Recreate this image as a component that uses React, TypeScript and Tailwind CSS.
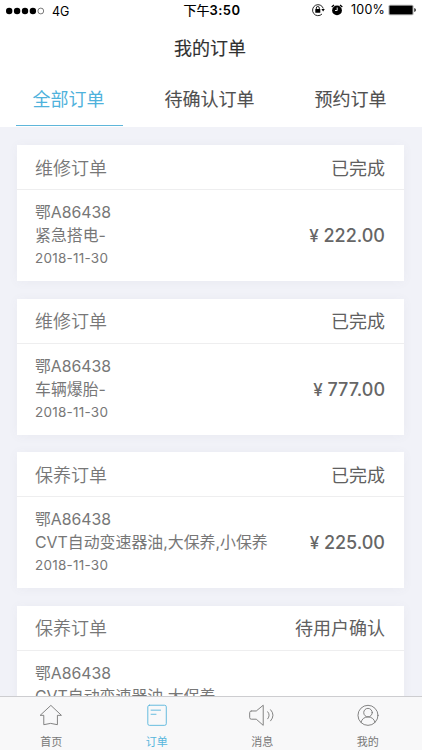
import type { ReactNode } from 'react';

type Order = {
  kind: string;
  status: string;
  plate: string;
  service: string;
  date: string;
  price: string;
};

const orders: Order[] = [
  { kind: '维修订单', status: '已完成', plate: '鄂A86438', service: '紧急搭电-', date: '2018-11-30', price: '222.00' },
  { kind: '维修订单', status: '已完成', plate: '鄂A86438', service: '车辆爆胎-', date: '2018-11-30', price: '777.00' },
  { kind: '保养订单', status: '已完成', plate: '鄂A86438', service: 'CVT自动变速器油,大保养,小保养', date: '2018-11-30', price: '225.00' },
  { kind: '保养订单', status: '待用户确认', plate: '鄂A86438', service: 'CVT自动变速器油,大保养', date: '', price: '' },
];

function StatusBar() {
  return (
    <div className="grid h-5 grid-cols-3 items-center text-[12.5px] leading-5 text-black">
      <div className="flex items-center pl-[6px]">
        <svg width="39" height="8" viewBox="0 0 39 8">
          <circle cx="3.2" cy="4" r="3.2" />
          <circle cx="11.1" cy="4" r="3.2" />
          <circle cx="19" cy="4" r="3.2" />
          <circle cx="26.9" cy="4" r="3.2" />
          <circle cx="34.8" cy="4" r="2.9" fill="none" stroke="#222" strokeWidth="0.6" />
        </svg>
        <span className="pt-[2px] pl-[7px]">4G</span>
      </div>
      <div className="-mt-[3px] pl-[2px] text-center text-[13px] font-semibold tracking-[0.5px] whitespace-nowrap"><span className="text-[13px] font-normal tracking-normal [-webkit-text-stroke:0.2px]">下午</span>3:50</div>
      <div className="-mt-[2px] flex items-center justify-end pr-[6px]">
        <svg width="14" height="14" viewBox="0 0 14 14" className="mr-[6px]">
          <path d="M12.3 5.5A5.5 5.5 0 1 0 11 11" fill="none" stroke="#111" strokeWidth="0.9" />
          <path d="M10.4 6h3.4l-1.7 2.6z" />
          <rect x="4.3" y="6" width="5" height="3.8" rx="0.4" />
          <path d="M5.3 6.2V5a1.5 1.5 0 0 1 3 0v1.2" fill="none" stroke="#000" strokeWidth="0.9" />
        </svg>
        <svg width="12" height="12" viewBox="0 0 12 12" className="mr-[8px]">
          <circle cx="6" cy="6.4" r="4.9" />
          <path d="M.7 3.1 3 1M11.3 3.1 9 1" stroke="#000" strokeWidth="1.3" />
          <path d="M6.2 3.5v3H4" fill="none" stroke="#fff" strokeWidth="0.9" />
        </svg>
        <span className="tracking-[0.2px]">100%</span>
        <svg width="28" height="12" viewBox="0 0 28 12" className="ml-[3px]">
          <rect x="0.5" y="0.7" width="25" height="10.6" rx="1.6" fill="#aaa" />
          <rect x="1.5" y="1.7" width="23" height="8.6" rx="0.8" />
          <path d="M26.4 4v4q1.4-.5 1.4-2t-1.4-2" />
        </svg>
      </div>
    </div>
  );
}

function Tab({ label, active = false }: { label: string; active?: boolean }) {
  return (
    <div className={`flex h-[59px] w-[107px] flex-col items-center justify-between pt-[19px] text-[18px] leading-7 whitespace-nowrap ${active ? 'text-[#4fb2dc]' : 'text-[#505050] [-webkit-text-stroke:0.1px]'}`}>
      <span className="-ml-[2px]">{label}</span>
      {active && <div className="h-px w-full bg-[#5fb6da]" />}
    </div>
  );
}

function OrderCard({ order }: { order: Order }) {
  return (
    <article className="h-[136px] shrink-0 bg-white text-[#777] shadow-[0_1px_10px_rgba(90,90,120,0.05)]">
      <header className="flex h-[45px] items-center justify-between border-b border-[#eeeeef] pt-[2px] pr-[19px] pl-[18.5px] text-[18px]">
        <span className="font-[350]">{order.kind}</span>
        <span className="text-[#606060]">{order.status}</span>
      </header>
      <div className="flex justify-between pt-[11px] pr-[19px] pl-[18.5px]">
        <div className="whitespace-nowrap">
          <p className="text-[15.8px] leading-6">{order.plate}</p>
          <p className="-mt-px text-[15.9px] leading-6">{order.service}</p>
          <p className="text-[13.5px] leading-5 tracking-[0.25px]">{order.date}</p>
        </div>
        {order.price && (
          <p className="pt-[21px] text-[18px] leading-7 font-medium whitespace-pre text-[#666]"><span className="text-[17px]">¥</span> {order.price}</p>
        )}
      </div>
    </article>
  );
}

function NavItem({ label, active = false, children }: { label: string; active?: boolean; children: ReactNode }) {
  return (
    <div className={`flex w-[105.5px] flex-col items-center pt-[7px] ${active ? 'text-[#56b5dc]' : 'text-[#777]'}`}>
      <svg width="32" height="28" viewBox="0 0 32 28" fill="none" stroke="currentColor" strokeWidth="1.1" strokeLinejoin="round" strokeLinecap="round">
        {children}
      </svg>
      <span className="mt-[7px] text-[11px] leading-4">{label}</span>
    </div>
  );
}

export default function App() {
  return (
    <div className="flex h-[750px] w-[422px] flex-col overflow-hidden bg-[#f1f2f8] font-[Inter,'Noto_Sans_CJK_SC',sans-serif]">
      <div className="h-[127px] shrink-0 bg-white">
        <StatusBar />
        <h1 className="h-[47px] pt-[15px] pr-[2px] text-center text-[18px] leading-7 text-[#303030] [-webkit-text-stroke:0.15px]">我的订单</h1>
        <nav className="flex gap-[34px] pl-[16px]">
          <Tab label="全部订单" active />
          <Tab label="待确认订单" />
          <Tab label="预约订单" />
        </nav>
      </div>
      <main className="flex min-h-0 flex-1 flex-col gap-[17.6px] overflow-hidden pt-[18px] pr-[18px] pl-[16.5px]">
        {orders.map((order, i) => (
          <OrderCard key={i} order={order} />
        ))}
      </main>
      <footer className="-ml-[1.5px] flex h-[54px] w-[424px] shrink-0 border-t border-[#cdcdd0] bg-[#f8f8f9]">
        <NavItem label="首页">
          <path d="M15.5 2 2.8 13.8h4.4v11.4q8.3-3.2 16.6 0V13.8h4.4z" />
        </NavItem>
        <NavItem label="订单" active>
          <rect x="4.8" y="1.5" width="22.5" height="24.5" rx="2" />
          <path d="M8.8 7.5h11.5M8.8 12.5h6" />
        </NavItem>
        <NavItem label="消息">
          <path d="M3 8.5h6l8.5-7V26L9 18.500H3q-2 0-2-2v-6q0-2 2-2M23 9.500q3.500 4 0 8.500M26.500 7q6 6.500 0 13.500" />
        </NavItem>
        <NavItem label="我的">
          <circle cx="16" cy="13.8" r="12.2" />
          <circle cx="16" cy="10.5" r="5.2" />
          <path d="M7.500 22.300q1.500-6.300 8.500-6.600 7 .3 8.500 6.600" />
        </NavItem>
      </footer>
    </div>
  );
}
